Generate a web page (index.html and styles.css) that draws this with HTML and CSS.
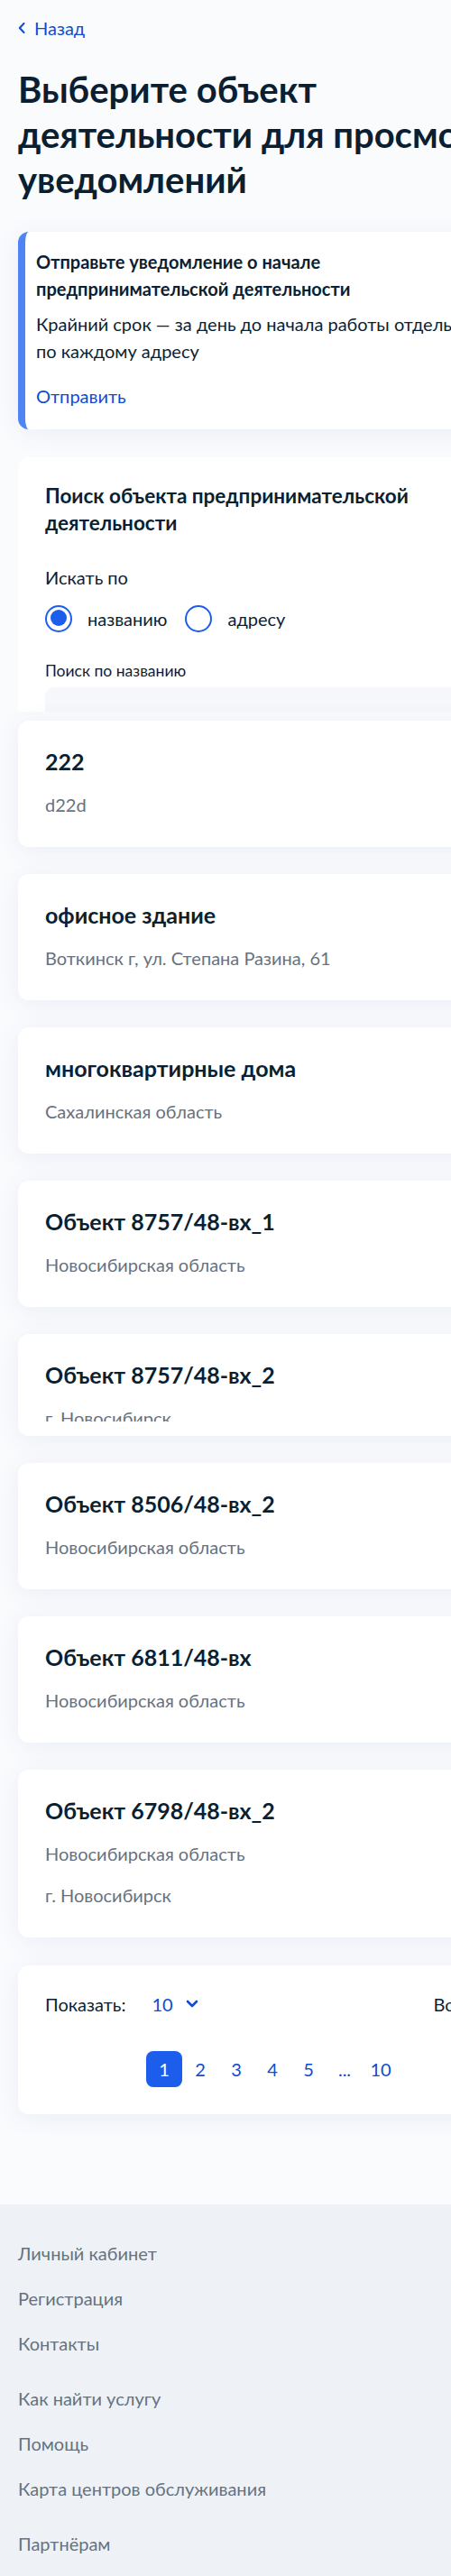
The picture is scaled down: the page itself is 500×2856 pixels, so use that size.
FILE: index.html
```html
<!DOCTYPE html>
<html lang="ru">
<head>
<meta charset="utf-8">
<title>Выберите объект деятельности</title>
<link rel="stylesheet" href="styles.css">
</head>
<body>
<div class="page">
  <main class="main">
    <a class="back" href="#">
      <svg class="back-icon" viewBox="0 0 8 12" aria-hidden="true"><path d="M6.5 1 L1.8 6 L6.5 11" fill="none" stroke="currentColor" stroke-width="2" stroke-linecap="round" stroke-linejoin="round"/></svg>
      <span>Назад</span>
    </a>

    <h1 class="title">Выберите объект<br>деятельности для просмотра<br>уведомлений</h1>

    <section class="info">
      <h2 class="info-title">Отправьте уведомление о начале<br>предпринимательской деятельности</h2>
      <p class="info-text">Крайний срок — за день до начала работы отдельно<br>по каждому адресу</p>
      <a class="link info-link" href="#">Отправить</a>
    </section>

    <div class="search-clip">
      <section class="card search">
        <h2 class="search-title">Поиск объекта предпринимательской<br>деятельности</h2>
        <div class="search-by">Искать по</div>
        <div class="radios">
          <label class="radio"><span class="radio-mark checked"></span><span>названию</span></label>
          <label class="radio"><span class="radio-mark"></span><span>адресу</span></label>
        </div>
        <div class="field-label">Поиск по названию</div>
        <div class="field"></div>
      </section>
    </div>

    <div class="list">
      <article class="card item">
        <h3 class="item-title">222</h3>
        <p class="item-sub">d22d</p>
      </article>
      <article class="card item">
        <h3 class="item-title">офисное здание</h3>
        <p class="item-sub">Воткинск г, ул. Степана Разина, 61</p>
      </article>
      <article class="card item">
        <h3 class="item-title">многоквартирные дома</h3>
        <p class="item-sub">Сахалинская область</p>
      </article>
      <article class="card item">
        <h3 class="item-title">Объект 8757/48-вх_1</h3>
        <p class="item-sub">Новосибирская область</p>
      </article>
      <article class="card item item-clipped">
        <div class="item-body">
          <h3 class="item-title">Объект 8757/48-вх_2</h3>
          <p class="item-sub">г. Новосибирск</p>
        </div>
      </article>
      <article class="card item">
        <h3 class="item-title">Объект 8506/48-вх_2</h3>
        <p class="item-sub">Новосибирская область</p>
      </article>
      <article class="card item">
        <h3 class="item-title">Объект 6811/48-вх</h3>
        <p class="item-sub">Новосибирская область</p>
      </article>
      <article class="card item">
        <h3 class="item-title">Объект 6798/48-вх_2</h3>
        <p class="item-sub">Новосибирская область</p>
        <p class="item-sub">г. Новосибирск</p>
      </article>
    </div>

    <section class="card pager">
      <div class="pager-top">
        <span>Показать:</span>
        <span class="per-page">10
          <svg class="per-page-icon" viewBox="0 0 14 9" aria-hidden="true"><path d="M2 2 L7 7 L12 2" fill="none" stroke="currentColor" stroke-width="2.6" stroke-linecap="round" stroke-linejoin="round"/></svg>
        </span>
        <span class="total">Всего: 9</span>
      </div>
      <div class="pages">
        <span class="page-num active">1</span>
        <span class="page-num">2</span>
        <span class="page-num">3</span>
        <span class="page-num">4</span>
        <span class="page-num">5</span>
        <span class="page-num">...</span>
        <span class="page-num">10</span>
      </div>
    </section>
  </main>

  <footer class="footer">
    <ul class="footer-group">
      <li><a href="#">Личный кабинет</a></li>
      <li><a href="#">Регистрация</a></li>
      <li><a href="#">Контакты</a></li>
    </ul>
    <ul class="footer-group">
      <li><a href="#">Как найти услугу</a></li>
      <li><a href="#">Помощь</a></li>
      <li><a href="#">Карта центров обслуживания</a></li>
    </ul>
    <ul class="footer-group">
      <li><a href="#">Партнёрам</a></li>
      <li><a href="#">Разработчикам</a></li>
    </ul>
  </footer>
</div>
</body>
</html>
```

FILE: styles.css
```css
* {
  box-sizing: border-box;
}

html,
body {
  margin: 0;
  padding: 0;
  overflow-x: hidden;
}

body {
  font-family: Lato, "Noto Sans", sans-serif;
  font-size: 20px;
  line-height: 30px;
  color: #0b1f33;
  background: #fafbfd;
}

h1, h2, h3, p {
  margin: 0;
}

a {
  text-decoration: none;
}

.main {
  width: 604px;
  padding: 14px 20px 100px;
}

.back {
  display: inline-flex;
  align-items: center;
  gap: 10px;
  color: #0d4cd3;
}

.back-icon {
  width: 8px;
  height: 12px;
  margin-top: 1px;
}

.title {
  margin: 28px 0 33px;
  font-size: 40px;
  line-height: 50px;
  font-weight: 700;
  color: #0b1f33;
}

.card {
  background: #ffffff;
  border-radius: 12px;
  box-shadow: 0 4px 28px rgba(40, 80, 170, 0.08);
}

.info {
  background: #ffffff;
  border-radius: 12px;
  border-left: 8px solid #4f84f5;
  padding: 18px 40px 22px 12px;
  box-shadow: 0 4px 28px rgba(40, 80, 170, 0.08);
}

.info-title {
  font-size: 20px;
  line-height: 30px;
  font-weight: 700;
}

.info-text {
  margin-top: 9px;
}

.info-link {
  display: block;
  margin-top: 20px;
  color: #0d4cd3;
}

.search-clip {
  margin-top: 31px;
  height: 282px;
  overflow: hidden;
  border-radius: 12px 12px 0 0;
}

.search {
  padding: 28px 30px 30px;
  box-shadow: none;
}

.search-title {
  font-size: 22.5px;
  line-height: 30px;
  font-weight: 700;
}

.search-by {
  margin-top: 30px;
}

.radios {
  display: flex;
  gap: 20px;
  margin-top: 16px;
}

.radio {
  display: flex;
  align-items: center;
  gap: 17px;
}

.radio-mark {
  width: 30px;
  height: 30px;
  border-radius: 50%;
  border: 2.5px solid #1d5deb;
  background: #ffffff;
  position: relative;
}

.radio-mark.checked::after {
  content: "";
  position: absolute;
  left: 3.5px;
  top: 3.5px;
  width: 18px;
  height: 18px;
  border-radius: 50%;
  background: #1d5deb;
}

.field-label {
  margin-top: 30px;
  font-size: 17.5px;
  line-height: 25px;
}

.field {
  margin-top: 6px;
  height: 60px;
  border-radius: 10px;
  background: #f5f7fa;
}

.list {
  margin-top: 10px;
  display: flex;
  flex-direction: column;
  gap: 30px;
}

.item {
  padding: 30px 30px 32px;
}

.item-title {
  font-size: 25px;
  line-height: 30px;
  font-weight: 700;
  color: #0b1f33;
}

.item-sub {
  margin-top: 16px;
  color: #66727f;
}

.item-title + .item-sub {
  margin-top: 18px;
}

.item-clipped {
  padding-bottom: 16px;
}

.item-body {
  height: 67px;
  overflow: hidden;
}

.pager {
  margin-top: 31px;
  padding: 28px 30px 30px;
}

.pager-top {
  display: flex;
  align-items: center;
}

.per-page {
  display: inline-flex;
  align-items: center;
  margin-left: 29px;
  color: #0d4cd3;
}

.per-page-icon {
  width: 14px;
  height: 9px;
  margin-left: 14px;
}

.total {
  margin-left: auto;
}

.pages {
  display: flex;
  justify-content: center;
  margin-top: 37px;
}

.page-num {
  width: 40px;
  height: 40px;
  display: flex;
  align-items: center;
  justify-content: center;
  color: #0d4cd3;
  border-radius: 8px;
}

.page-num.active {
  background: #1d5deb;
  color: #ffffff;
}

.footer {
  background: #eef2f7;
  padding: 39px 20px 40px;
}

.footer-group {
  list-style: none;
  margin: 0;
  padding: 0;
  display: flex;
  flex-direction: column;
  gap: 20px;
}

.footer-group + .footer-group {
  margin-top: 31px;
}

.footer-group a {
  color: #66727f;
}
```
